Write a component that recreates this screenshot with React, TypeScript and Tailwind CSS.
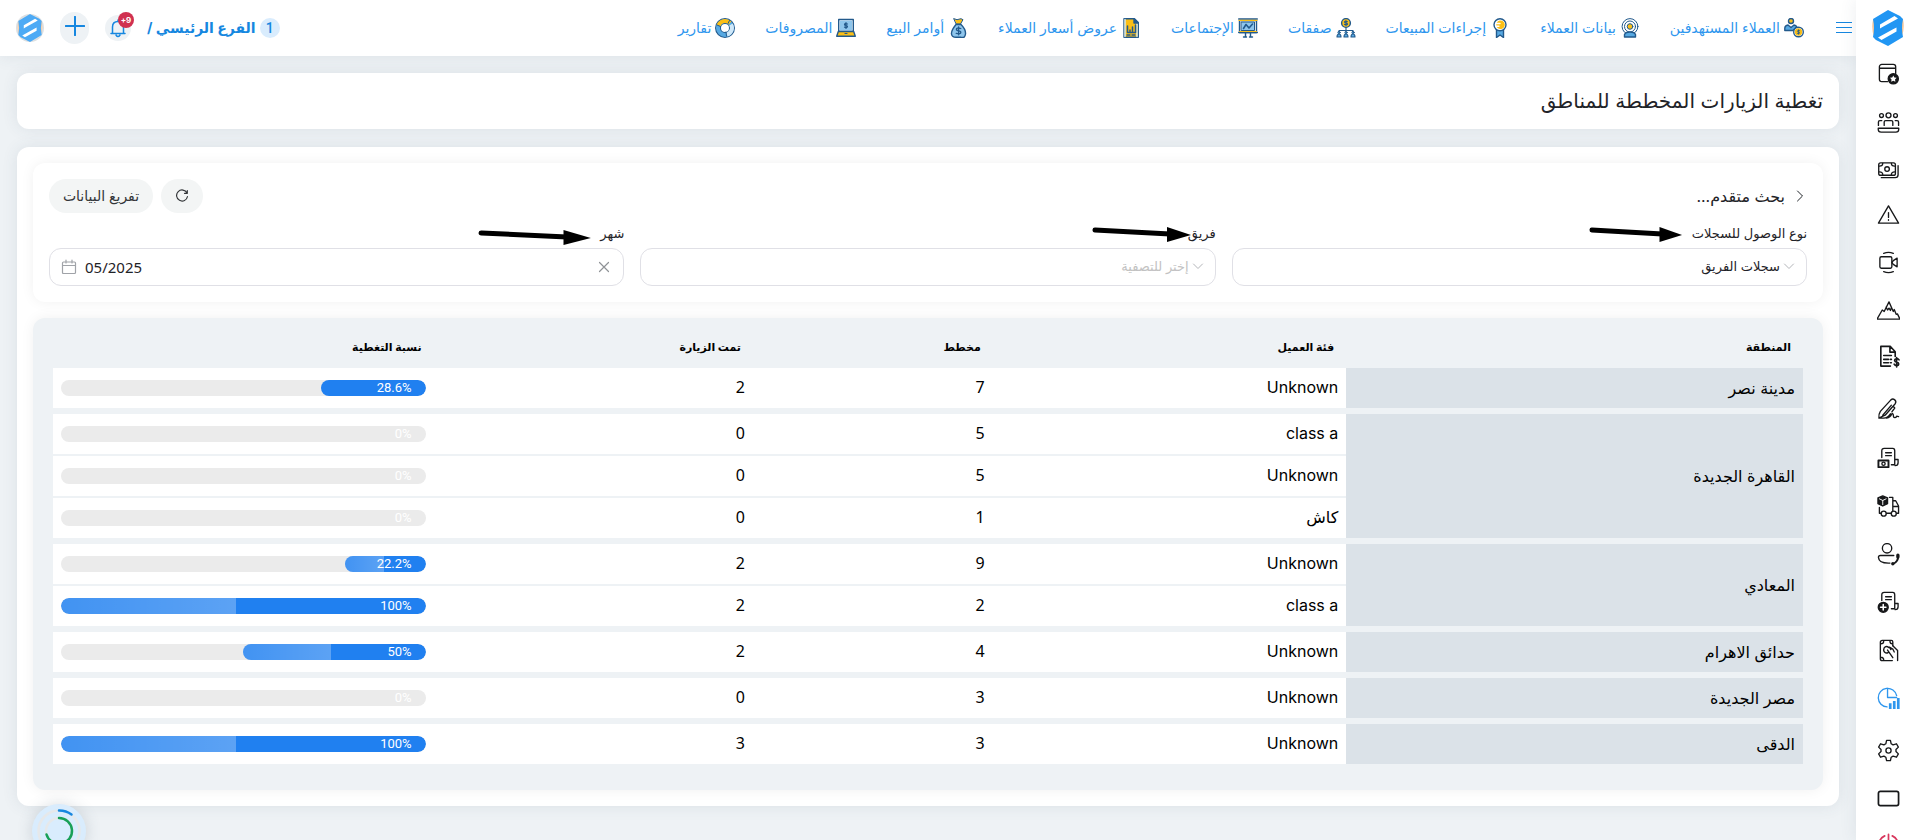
import React from 'react';

type IconProps = { children: React.ReactNode; className?: string; box?: string };

function Svg({ children, className = 'size-6', box = '0 0 24 24' }: IconProps) {
  return (
    <svg
      viewBox={box}
      className={className}
      fill="none"
      stroke="currentColor"
      strokeWidth="1.4"
      strokeLinecap="round"
      strokeLinejoin="round"
      aria-hidden="true"
    >
      {children}
    </svg>
  );
}

function Logo({ className }: { className: string }) {
  return (
    <svg viewBox="0 0 32 36" className={className} aria-hidden="true">
      <path d="M1 10Q-1 18 2 27L6 28V9ZM31 9Q33 18 30 26L26 27V8Z" fill="#f6c79b" />
      <path d="M16 0 28 6 31 9Q29 18 31 27L16 36 4 30 1 27Q3 18 1 9Z" fill="#2196f3" />
      <path d="M8 18.500V14.500L22.500 6 26 8.500 10.500 17ZM24.500 17.500V21.500L9.500 30 6 27.500 21.500 19Z" fill="#fff" />
    </svg>
  );
}

const NAVY = '#235a8c';
const SKY = '#57a9e2';
const GOLD = '#fbbf16';

const navItems: { label: string; icon: React.ReactNode }[] = [
  {
    label: 'العملاء المستهدفين',
    icon: (
      <>
        <circle cx="7" cy="3" r="2.500" fill={GOLD} stroke={NAVY} />
        <path d="M.8 12.500V10Q1 7.500 4 7l3 2.500L10 7q2 .3 2.800 1.800L9 12.500Z" fill={SKY} stroke={NAVY} />
        <circle cx="14.500" cy="14" r="4.800" fill="#fff" stroke={NAVY} />
        <circle cx="14.500" cy="14" r="3" fill={GOLD} stroke={GOLD} />
        <path d="M15.800 12.700q-2.600-1-2.600.4 0 .8 1.300.9t1.300 1q0 1.300-2.600.4M14.500 11.800v4.400" stroke={NAVY} strokeWidth=".8" />
      </>
    ),
  },
  {
    label: 'بيانات العملاء',
    icon: (
      <>
        <circle cx="10" cy="8.500" r="7.900" fill="#fff" stroke={NAVY} strokeWidth="1" />
        <circle cx="10" cy="8.500" r="5.500" fill="#fff" stroke={NAVY} strokeWidth="1" />
        <circle cx="10" cy="8.500" r="2.800" fill={GOLD} stroke={NAVY} strokeWidth="1" />
        <path d="M4.500 19v-2.500Q5.500 14 10 14t5.500 2.500V19Z" fill={SKY} stroke={NAVY} />
      </>
    ),
  },
  {
    label: 'إجراءات المبيعات',
    icon: (
      <>
        <path d="M6.500 11v8.500l3.500-2.500 3.500 2.500V11Z" fill={SKY} stroke={NAVY} />
        <circle cx="10" cy="6.800" r="6" fill="#fff" stroke={NAVY} />
        <circle cx="10.500" cy="6.800" r="3.600" fill={GOLD} stroke={GOLD} />
        <path d="M6 5.500h4M6 8.200h3" stroke="#fff" />
      </>
    ),
  },
  {
    label: 'صفقات',
    icon: (
      <>
        <circle cx="10" cy="5" r="4.400" fill={GOLD} stroke={NAVY} />
        <path d="M11.300 3.500q-2.800-.8-2.800.4 0 .9 1.500 1t1.500 1.100q0 1.300-3 .4M10 2.500v5M10 9.500v3M3 14v-1.500h14V14" stroke={NAVY} strokeWidth="1.100" />
        <path d="M1 19q0-3 2-3t2 3ZM8 19q0-3 2-3t2 3ZM15 19q0-3 2-3t2 3Z" fill={SKY} stroke={NAVY} strokeWidth="1.100" />
        <circle cx="3" cy="14.500" r="1.100" fill={SKY} stroke={NAVY} strokeWidth="1" />
        <circle cx="10" cy="14.500" r="1.100" fill={SKY} stroke={NAVY} strokeWidth="1" />
        <circle cx="17" cy="14.500" r="1.100" fill={SKY} stroke={NAVY} strokeWidth="1" />
      </>
    ),
  },
  {
    label: 'الإجتماعات',
    icon: (
      <>
        <path d="M1.500 2.500h17v12h-17Z" fill="#fff" stroke={NAVY} />
        <path d="M3.500 4h13v8.500h-13Z" fill="#8fc6ec" stroke={NAVY} strokeWidth="1" />
        <path d="M.7 1h18.600M.7 14.500h18.600M7.500 15v4M12.500 15v4M5.500 19h3M11.500 19h3" stroke={NAVY} />
        <path d="M1 2.400h18M1.500 13.500h17" stroke={GOLD} strokeWidth="1.100" />
        <path d="m5.500 10.500 2.500-4 3 3.500 3.500-4" stroke={NAVY} strokeWidth="1.600" />
      </>
    ),
  },
  {
    label: 'عروض أسعار العملاء',
    icon: (
      <>
        <path d="M3 .7h10.500L17.300 4.500v14.800H3Z" fill={GOLD} stroke={NAVY} />
        <path d="M4 1.500v17M16 5.500v13" stroke="#d6ecfa" />
        <path d="M13 1v4h4Z" fill={NAVY} stroke={NAVY} />
        <path d="M6.500 8v6.500h8V7M9 12v2M11.500 9v5" stroke={NAVY} strokeWidth="1.500" />
        <path d="M6 17h3M11 17h3" stroke={NAVY} />
      </>
    ),
  },
  {
    label: 'أوامر البيع',
    icon: (
      <>
        <path d="m6 .7 3 1 4-1 2 1L12.500 6h-4Z" fill={GOLD} stroke={NAVY} strokeWidth="1" />
        <path d="M8 6.500h5q5 5 4.500 9.500T13 19.300H8q-4 0-4.500-3.300T8 6.500Z" fill="#8fc6ec" stroke={NAVY} />
        <path d="M12.800 10.500q-4.400-1.300-4.400.8 0 1.400 2.200 1.500t2.200 1.700q0 2-4.600.8M10.600 8.800v8" stroke={NAVY} strokeWidth="1.300" />
      </>
    ),
  },
  {
    label: 'المصروفات',
    icon: (
      <>
        <path d="M2.700 1.500h14.600v12H2.700Z" fill="#fff" stroke={NAVY} />
        <path d="M4.500 3.200h11v8.600h-11Z" fill="#8fc6ec" stroke="#8fc6ec" />
        <path d="M2.300 13.500h15.400l1.600 4.700H.7Z" fill={GOLD} stroke={NAVY} />
        <path d="M11.500 6q-3-.9-3 .5 0 .9 1.500 1t1.500 1.100q0 1.400-3 .5M10 4.500v6M9 15.500h2" stroke={NAVY} strokeWidth="1.200" />
      </>
    ),
  },
  {
    label: 'تقارير',
    icon: (
      <>
        <circle cx="10" cy="10" r="7" stroke={NAVY} strokeWidth="6" />
        <circle cx="10" cy="10" r="7" stroke={SKY} strokeWidth="4" />
        <path d="M3.500 7.500A7 7 0 0 1 15 5" stroke={GOLD} strokeWidth="4" strokeLinecap="butt" />
        <path d="M16 6.500A7 7 0 0 1 12 16.700" stroke="#cfe8f9" strokeWidth="4" strokeLinecap="butt" />
        <path d="m2 7 3.500 1.500M14.500 2.500l-1.500 3M11.500 18l-.5-4" stroke={NAVY} strokeWidth="1" />
      </>
    ),
  },
];

const dark = 'text-[#17181a]';

const sideItems: { name: string; size: string; color: string; icon: React.ReactNode }[] = [
  {
    name: 'المفضلة',
    size: 'h-6',
    color: dark,
    icon: (
      <>
        <path d="M11 19.500H5a2.500 2.500 0 0 1-2.500-2.500V4A2.500 2.500 0 0 1 5 1.500h12A2.500 2.500 0 0 1 19.500 4v7M2.500 5.500h17" />
        <circle cx="17" cy="16.500" r="5.300" fill="currentColor" />
        <path d="m17 13 1.100 2.200 2.400.3-1.700 1.700.4 2.400-2.200-1.100-2.200 1.100.4-2.400-1.700-1.700 2.400-.3Z" fill="#fff" stroke="none" />
      </>
    ),
  },
  {
    name: 'الموظفون',
    size: 'h-6',
    color: dark,
    icon: (
      <>
        <circle cx="12" cy="4.500" r="2.600" />
        <circle cx="4.700" cy="4.800" r="2" />
        <circle cx="19.300" cy="4.800" r="2" />
        <path d="M7.500 15v-3.500q0-1.500 1.500-1.500h6q1.500 0 1.500 1.500V15M1.500 15v-3.500q0-1.500 1.500-1.500h2M22.500 15v-3.500q0-1.500-1.500-1.500h-2M1.300 18h21.400v1q0 3-3 3H4.300q-3 0-3-3Z" />
      </>
    ),
  },
  {
    name: 'المدفوعات',
    size: 'h-6',
    color: dark,
    icon: (
      <>
        <rect x="1.800" y="4" width="17.400" height="13" rx="2" />
        <circle cx="10.500" cy="10.500" r="2.400" />
        <path d="M6 4.500q0 3-3.500 3M15 4.500q0 3 3.500 3M6 16.500q0-3-3.500-3M15 16.500q0-3 3.500-3M4.500 19.500H19q3 0 3-3V7" />
      </>
    ),
  },
  {
    name: 'التنبيهات',
    size: 'h-4',
    color: dark,
    icon: (
      <>
        <path d="M12 3 1.500 21h21Z" />
        <path d="M12 10v5M12 17.500v.5" />
      </>
    ),
  },
  {
    name: 'الاجتماعات',
    size: 'h-8',
    color: dark,
    icon: (
      <>
        <rect x="3" y="6" width="12.500" height="12" rx="1.500" />
        <path d="m15.500 12 1.500-2 4-2.500v9L17 14ZM7 2.500Q12 .5 17 2.500M7 21.500q5 2 10 0" />
      </>
    ),
  },
  {
    name: 'الأهداف',
    size: 'h-4',
    color: dark,
    icon: <path d="M0 21 5.500 11.500l2 1.500L12.500 3l4.500 10 1-2L20 16l1.300-.5L24 21ZM9.500 8.500l1.500 3 1.500-2 1.500 2.500 1-3" />,
  },
  {
    name: 'الفواتير',
    size: 'h-7',
    color: dark,
    icon: (
      <>
        <path d="M14 22H4V1.500h10L19 7v5M13.500 2v5.500H19M7 11h8M7 15h5M7 18.500h5M14 15h1M14 18.500h1" strokeWidth="1.700" />
        <path d="M23 15.500q-1-1.500-2.700-1.200-2 .4-1.900 1.900.2 1.300 2.200 1.700t2.100 1.900q0 1.500-1.900 1.700-2 .1-2.900-1.500M20.500 13v10" strokeWidth="1.700" />
      </>
    ),
  },
  {
    name: 'التوقيعات',
    size: 'h-7',
    color: dark,
    icon: (
      <path d="M2 22q-.5-4 1.500-7L14.500 3q2-1.700 4 0t.5 4L8.500 19Q6 20 2 22ZM6 19 15 8.500M2 22h5q4 0 7-4.500M17 9.500l1.500 2-3 4M10 22q4-1 5-3.500t2 0q0 3 1.500 3t2-1.500l2 .5" />
    ),
  },
  {
    name: 'سندات القبض',
    size: 'h-6',
    color: dark,
    icon: (
      <>
        <path d="M5 11V4q0-2.500 2.500-2.500h9Q18.500 1.500 18.500 4v14.500H15M18.500 13H22v3.500q0 3-3 3M9 6h6M9 9h6" />
        <rect x="1.500" y="14" width="10.500" height="7" strokeWidth="2" />
        <circle cx="6.800" cy="17.500" r="1.700" />
      </>
    ),
  },
  {
    name: 'التوصيل',
    size: 'h-6',
    color: dark,
    icon: (
      <>
        <path d="M6 1 11 3v6l-5 2.500L1 9V3Z" fill="currentColor" />
        <path d="m2.500 4 3.500 1.700L9.500 4M6 5.700V10" stroke="#fff" strokeWidth="1" />
        <path d="M13 2.500h3.500V19H10M2.500 13v6H4M16.500 6h3l3 5.500V19h-2M16.500 12h6" />
        <circle cx="7" cy="19.500" r="2.600" />
        <circle cx="17.500" cy="19.500" r="2.600" fill="#fff" />
      </>
    ),
  },
  {
    name: 'خدمة العملاء',
    size: 'h-6',
    color: dark,
    icon: (
      <>
        <circle cx="10.500" cy="5.500" r="4.900" />
        <path d="M17.500 13H3.500q-2 0-2 2 .5 6.500 12 6" />
        <path d="M22 13.500q.5 6-5.500 8.500" strokeWidth="2" />
        <path d="M21.800 12.800v1.700M16.500 21.500v.2" strokeWidth="3.500" />
      </>
    ),
  },
  {
    name: 'إضافة سند',
    size: 'h-6',
    color: dark,
    icon: (
      <>
        <path d="M5 10V4q0-2.500 2.500-2.500h9Q18.500 1.500 18.500 4v14.500H15M18.500 13H22v3.500q0 3-3 3M9 6h6M9 9h6" />
        <circle cx="6.500" cy="17" r="5.200" fill="currentColor" />
        <path d="M6.500 14.200v5.600M3.700 17h5.600" stroke="#fff" strokeWidth="1.600" />
      </>
    ),
  },
  {
    name: 'التحصيل',
    size: 'h-6',
    color: dark,
    icon: (
      <>
        <path d="M16 22.500H5.500Q3.500 22.500 3.500 20.500V3.500q0-2 2-2H15q1.500 0 1.500 1.500v4M4 5q3 0 3-3M4 19q3 0 3 3M16 5q-2.500 0-2.500-3" />
        <path d="M12.500 9q-3-2.500-5 .2-1.500 4 1.500 5.300 1.500.4 2.500-.3M16.500 7l5 5v10.500M11 11.500l5.500 8M14.500 11l-1.500-2.500 3.500 2 1.500 3" />
      </>
    ),
  },
  {
    name: 'التقارير',
    size: 'h-6',
    color: 'text-[#2e96ee]',
    icon: (
      <>
        <path d="M10.500 20.800A9.700 9.700 0 1 1 20.500 9" />
        <path d="M11 1.500V11h9.500" />
        <path d="M13.800 17v6M18 14.500V23M22.200 11.500V23" strokeWidth="2.800" strokeLinecap="butt" />
      </>
    ),
  },
  {
    name: 'الإعدادات',
    size: 'h-8',
    color: dark,
    icon: (
      <>
        <path d="M10 1.500h4l.8 3.500 2 1.200L20.300 5l2 3.500-2.500 2.500v2l2.500 2.500-2 3.500-3.500-1.200-2 1.200-.8 3.500h-4L9.200 19l-2-1.200L3.700 19l-2-3.500L4.200 13v-2L1.700 8.500l2-3.500 3.500 1.200 2-1.200Z" />
        <circle cx="12" cy="12" r="2.700" />
      </>
    ),
  },
  {
    name: 'الشاشة',
    size: 'h-4',
    color: dark,
    icon: <rect x="1.500" y="4.500" width="21" height="15" rx="2" strokeWidth="1.800" />,
  },
  {
    name: 'تسجيل الخروج',
    size: 'h-7',
    color: 'text-[#d8385e]',
    icon: <path d="M12 1.500V12M8 3a10 10 0 1 0 8 0" strokeWidth="1.800" />,
  },
];

type Row = { category: string; planned: number; visited: number; rate: number; shine?: boolean };

const groups: { area: string; rows: Row[] }[] = [
  { area: 'مدينة نصر', rows: [{ category: 'Unknown', planned: 7, visited: 2, rate: 28.6 }] },
  {
    area: 'القاهرة الجديدة',
    rows: [
      { category: 'class a', planned: 5, visited: 0, rate: 0 },
      { category: 'Unknown', planned: 5, visited: 0, rate: 0 },
      { category: 'كاش', planned: 1, visited: 0, rate: 0 },
    ],
  },
  {
    area: 'المعادي',
    rows: [
      { category: 'Unknown', planned: 9, visited: 2, rate: 22.2, shine: true },
      { category: 'class a', planned: 2, visited: 2, rate: 100, shine: true },
    ],
  },
  { area: 'حدائق الاهرام', rows: [{ category: 'Unknown', planned: 4, visited: 2, rate: 50, shine: true }] },
  { area: 'مصر الجديدة', rows: [{ category: 'Unknown', planned: 3, visited: 0, rate: 0 }] },
  { area: 'الدقى', rows: [{ category: 'Unknown', planned: 3, visited: 3, rate: 100, shine: true }] },
];

function RateBar({ rate, shine }: { rate: number; shine?: boolean }) {
  return (
    <div className="relative h-4 overflow-hidden rounded-full bg-[#ebebeb]">
      <div className="h-full overflow-hidden rounded-full bg-[#2080f0]" style={{ width: `${rate}%` }}>
        {shine && <div className="mr-auto h-full w-[48%] bg-linear-to-r from-white/15 to-white/27" />}
      </div>
      <span dir="ltr" className="absolute inset-y-0 right-3.5 font-['Roboto',sans-serif] text-[13px] leading-4 text-white">
        {rate}%
      </span>
    </div>
  );
}

function Arrow({ className }: { className: string }) {
  return (
    <svg viewBox="0 0 100 18" preserveAspectRatio="none" className={className} aria-hidden="true">
      <path d="M3 5 78 9" stroke="#000" strokeWidth="5" strokeLinecap="round" />
      <path d="M75 2 99 10 75 17Z" fill="#000" />
    </svg>
  );
}

function Chevron() {
  return (
    <Svg className="pointer-events-none absolute top-3 right-3 size-3 text-[#b4b6ba]" box="0 0 12 12">
      <path d="m1.500 4 4.500 4.500L10.500 4" strokeWidth="1" />
    </Svg>
  );
}

const fieldBox = 'h-[38px] w-full appearance-none rounded-xl border border-[#e0e0e6] bg-white outline-none';

export default function App() {
  return (
    <div
      dir="rtl"
      className="flex min-h-screen bg-[#eef2f5] font-['Inter','DejaVu_Sans',sans-serif] text-[#1f2328]"
    >
      <aside className="sticky top-0 z-10 flex h-screen w-[63px] shrink-0 flex-col items-center overflow-hidden bg-white shadow-[0_0_16px_rgba(60,80,100,0.1)]">
        <a href="#home" aria-label="الرئيسية" className="mt-2.5 shrink-0">
          <Logo className="h-9 w-8" />
        </a>
        <nav aria-label="القائمة الجانبية" className="mt-4 flex flex-col items-center gap-6 pl-0.5">
          {sideItems.map((item) => (
            <a
              key={item.name}
              href="#section"
              aria-label={item.name}
              className={`flex shrink-0 items-center justify-center ${item.size} ${item.color}`}
            >
              <Svg className="size-[23px]">{item.icon}</Svg>
            </a>
          ))}
        </nav>
      </aside>

      <div className="flex min-w-0 flex-1 flex-col">
        <header className="flex h-14 items-center bg-white pr-1 pl-4 shadow-[0_0_16px_rgba(60,80,100,0.1)]">
          <button type="button" aria-label="القائمة" className="ml-8 text-[#1687e0]">
            <Svg className="size-4" box="0 0 16 16">
              <path d="M.5 2.500h15M.5 7.500h15M.5 12.500h15" strokeWidth="1.200" />
            </Svg>
          </button>
          <nav aria-label="القائمة الرئيسية" className="flex items-center gap-[30px]">
            {navItems.map((item) => (
              <a key={item.label} href="#page" className="flex items-center gap-1 text-sm whitespace-nowrap text-[#2e96ee]">
                <Svg className="size-5 shrink-0" box="0 0 20 20">
                  {item.icon}
                </Svg>
                {item.label}
              </a>
            ))}
          </nav>
          <div className="mr-auto flex items-center gap-4">
            <a href="#branch" className="flex items-center gap-1 text-sm font-bold whitespace-nowrap text-[#1687e0]">
              <span className="flex size-5 items-center justify-center rounded-full bg-[#d9ecfd] font-['Roboto',sans-serif] font-medium">1</span>
              <span>الفرع الرئيسي /</span>
            </a>
            <button type="button" aria-label="الإشعارات" className="relative flex size-[26px] items-center justify-center rounded-full bg-[#eef2f5] text-[#1687e0]">
              <Svg className="size-5" box="0 0 20 20">
                <path d="M3 15.500h14M4.500 15V9q0-5.500 5.500-5.500T15.500 9v6M10 3.500V2M8 17q2 3 4 0" strokeWidth="1.500" />
              </Svg>
              <span dir="ltr" className="absolute -top-[3px] -right-[3px] flex size-4 items-center justify-center rounded-full bg-[#d03050] text-[8px] font-bold text-white">
                +9
              </span>
            </button>
            <button type="button" aria-label="إضافة" className="flex h-8 w-[29px] items-center justify-center rounded-full bg-[#eef2f5] text-[#1687e0]">
              <Svg className="mb-1 size-5" box="0 0 20 20">
                <path d="M10 .8v18.400M.8 10h18.400" strokeWidth="2" />
              </Svg>
            </button>
            <button type="button" aria-label="الحساب" className="size-7 overflow-hidden rounded-full bg-[#d5d8da] opacity-80">
              <Logo className="h-7 w-7" />
            </button>
          </div>
        </header>

        <main className="flex flex-col gap-[18px] px-[17px] pt-[17px] pb-8">
          <div className="flex h-14 items-center rounded-xl bg-white px-4 shadow-[0_0_16px_rgba(60,80,100,0.1)]">
            <h1 className="text-xl">تغطية الزيارات المخططة للمناطق</h1>
          </div>

          <div className="flex flex-col gap-4 rounded-xl bg-white p-4 shadow-[0_0_16px_rgba(60,80,100,0.1)]">
            <section className="rounded-xl bg-white p-4 shadow-[0_0_14px_rgba(0,0,0,0.06)]">
              <div className="flex h-[34px] items-center justify-between">
                <button type="button" className="flex items-center gap-2 text-base">
                  <Svg className="size-3.5" box="0 0 14 14">
                    <path d="m4.500 2 5 5-5 5" strokeWidth="1" />
                  </Svg>
                  بحث متقدم...
                </button>
                <div className="flex gap-2">
                  <button type="button" aria-label="تحديث" className="flex h-[34px] w-[42px] items-center justify-center rounded-full bg-[#f3f5f5] text-[#333639]">
                    <Svg className="size-3.5" box="0 0 14 14">
                      <path d="M12 4A5.500 5.500 0 1 0 12.500 7.500M12.300 1.500V4.300H9.500" strokeWidth="1.200" />
                    </Svg>
                  </button>
                  <button type="button" className="h-[34px] w-[104px] rounded-full bg-[#f3f5f5] text-sm whitespace-nowrap text-[#333639]">
                    تفريغ البيانات
                  </button>
                </div>
              </div>

              <div className="mt-2 grid grid-cols-3 gap-4">
                <div className="relative">
                  <label htmlFor="access" className="block h-[27px] text-[13px] leading-6">
                    نوع الوصول للسجلات
                  </label>
                  <Arrow className="absolute top-1 right-[124px] h-[18px] w-[94px]" />
                  <div className="relative">
                    <select id="access" className={`${fieldBox} pr-[26px] pl-3 text-[13px]`}>
                      <option>سجلات الفريق</option>
                    </select>
                    <Chevron />
                  </div>
                </div>
                <div className="relative">
                  <label htmlFor="team" className="block h-[27px] text-[13px] leading-6">
                    فريق
                  </label>
                  <Arrow className="absolute top-1 right-6 h-[18px] w-[100px]" />
                  <div className="relative">
                    <select id="team" className={`${fieldBox} pr-[26px] pl-3 text-[13px] text-[#c2c2c2]`}>
                      <option>إختر للتصفية</option>
                    </select>
                    <Chevron />
                  </div>
                </div>
                <div className="relative">
                  <label htmlFor="month" className="block h-[27px] text-[13px] leading-6">
                    شهر
                  </label>
                  <Arrow className="absolute top-[7px] right-8 h-[18px] w-[114px]" />
                  <div className="relative">
                    <input
                      id="month"
                      type="text"
                      dir="ltr"
                      defaultValue="05/2025"
                      className={`${fieldBox} pr-10 pl-[35px] font-['Noto_Sans',sans-serif] text-[15px]`}
                    />
                    <Svg className="pointer-events-none absolute top-[11px] left-3 size-4 text-[#a0a3a8]" box="0 0 16 16">
                      <path d="M2.500 3h11Q14.500 3 14.500 4v9.500q0 1-1 1h-11q-1 0-1-1V4q0-1 1-1ZM1.500 6.500h13M5 1v3M11 1v3" strokeWidth="1.200" />
                    </Svg>
                    <button type="button" aria-label="مسح الشهر" className="absolute top-[13px] right-3.5 text-[#8f9296]">
                      <Svg className="size-3" box="0 0 12 12">
                        <path d="m1.500 1.500 9 9M10.500 1.500l-9 9" strokeWidth="1.200" />
                      </Svg>
                    </button>
                  </div>
                </div>
              </div>
            </section>

            <section className="rounded-xl bg-[#eef2f5] px-5 pt-2.5 pb-[26px] shadow-[0_0_14px_rgba(0,0,0,0.06)]">
              <table className="w-full table-fixed border-separate border-spacing-0 text-right text-black">
                <colgroup>
                  <col className="w-[26.1%]" />
                  <col className="w-[20.2%]" />
                  <col className="w-[13.7%]" />
                  <col className="w-[18.25%]" />
                  <col className="w-[21.75%]" />
                </colgroup>
                <thead>
                  <tr className="h-10 text-[11px]">
                    <th scope="col" className="px-3 pb-0.5 font-bold">المنطقة</th>
                    <th scope="col" className="px-3 pb-0.5 font-bold">فئة العميل</th>
                    <th scope="col" className="px-3 pb-0.5 font-bold">مخطط</th>
                    <th scope="col" className="px-3 pb-0.5 font-bold">تمت الزيارة</th>
                    <th scope="col" className="px-3 pb-0.5 font-bold">نسبة التغطية</th>
                  </tr>
                </thead>
                {groups.map((group, g) => (
                  <tbody key={group.area}>
                    {group.rows.map((row, r) => {
                      const edge = r > 0 ? 'h-[42px] border-t-2' : g > 0 ? 'h-[46px] border-t-[6px]' : 'h-10';
                      const cell = `${edge} border-[#eef2f5] bg-white px-2`;
                      return (
                        <tr key={r}>
                          {r === 0 && (
                            <th
                              scope="rowgroup"
                              rowSpan={group.rows.length}
                              className={`${edge} border-[#eef2f5] bg-[#dbe2e8] px-2 text-base font-normal`}
                            >
                              {group.area}
                            </th>
                          )}
                          <td className={`${cell} pb-0.5 text-base`}>{row.category}</td>
                          <td className={`${cell} pb-0.5 font-['Noto_Sans',sans-serif] text-base`}>{row.planned}</td>
                          <td className={`${cell} pb-0.5 font-['Noto_Sans',sans-serif] text-base`}>{row.visited}</td>
                          <td className={cell}>
                            <RateBar rate={row.rate} shine={row.shine} />
                          </td>
                        </tr>
                      );
                    })}
                  </tbody>
                ))}
              </table>
            </section>
          </div>
        </main>
      </div>

      <button
        type="button"
        aria-label="مؤشر الأداء"
        className="fixed -bottom-[18px] left-8 size-[54px] rounded-full bg-[#d9ecfd] shadow-[0_0_16px_rgba(60,80,100,0.2)]"
      >
        <Svg className="size-[54px]" box="0 0 54 54">
          <circle cx="27" cy="27" r="20.500" stroke="#e6e8ea" strokeWidth="2.500" />
          <circle cx="27" cy="27" r="13" stroke="#e6e8ea" strokeWidth="2.500" />
          <path d="M27 6.500A20.500 20.500 0 0 1 39.500 10.500" stroke="#1687e0" strokeWidth="2.500" />
          <path d="M27 14A13 13 0 1 1 14.500 30.500" stroke="#18a058" strokeWidth="2.500" />
        </Svg>
      </button>
    </div>
  );
}
